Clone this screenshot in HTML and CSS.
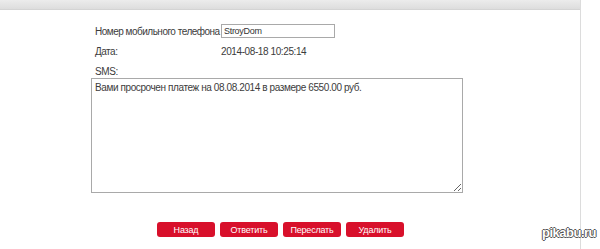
FILE: index.html
```html
<!DOCTYPE html>
<html lang="ru">
<head>
<meta charset="UTF-8">
<title>SMS</title>
<link rel="stylesheet" href="styles.css">
</head>
<body>
<div class="page">
<div class="topbar"></div>
<div class="content">
<div class="row">
<span class="label">Номер мобильного телефона</span>
<input class="phone" type="text" value="StroyDom">
</div>
<div class="row">
<span class="label">Дата:</span>
<span class="value">2014-08-18 10:25:14</span>
</div>
<div class="row sms-label">SMS:</div>
<textarea class="sms">Вами просрочен платеж на 08.08.2014 в размере 6550.00 руб.</textarea>
<div class="buttons">
<button type="button">Назад</button>
<button type="button">Ответить</button>
<button type="button">Переслать</button>
<button type="button">Удалить</button>
</div>
</div>
</div>
<div class="watermark">pikabu.ru</div>
</body>
</html>
```
FILE: styles.css
```css
body {
margin: 0;
background-color: #fff;
font-family: "Liberation Sans", Arial, sans-serif;
font-size: 10px;
letter-spacing: -0.4px;
color: #3c3c3c;
}
.page {
width: 580px;
height: 249px;
border-right: 1px solid #dcdcdc;
}
.topbar {
height: 9px;
background: linear-gradient(#ececec, #dddddd);
border-bottom: 1px solid #d4d4d4;
}
.content {
padding: 14px 0 0 95px;
}
.row {
display: flex;
align-items: center;
height: 14px;
margin-bottom: 6px;
white-space: nowrap;
}
.label {
width: 126px;
flex-shrink: 0;
letter-spacing: -0.5px;
}
.phone {
width: 108px;
height: 10px;
padding: 1px 2px;
margin: 0;
border: 1px solid #a9a9a9;
font-family: inherit;
font-size: 9px;
letter-spacing: -0.3px;
color: #333;
}
.sms-label {
margin-bottom: 2px;
}
.sms {
display: block;
width: 364px;
height: 107px;
margin: -2px 0 0 -4px;
padding: 3px;
border: 1px solid #a9a9a9;
font-family: inherit;
font-size: 10px;
letter-spacing: -0.4px;
color: #3c3c3c;
resize: both;
}
.buttons {
display: flex;
gap: 5px;
margin: 29px 0 0 62px;
}
.buttons button {
width: 58px;
height: 15px;
padding: 0;
border: none;
border-radius: 3px;
background-color: #d8102b;
color: #fff;
font-family: inherit;
font-size: 9px;
letter-spacing: -0.2px;
cursor: pointer;
}
.watermark {
position: absolute;
right: 4px;
bottom: 9px;
color: #fff;
font-size: 13px;
font-weight: bold;
letter-spacing: -0.5px;
text-shadow: -1px 0 #555, 1px 0 #555, 0 -1px #555, 0 1px #555;
}
```
